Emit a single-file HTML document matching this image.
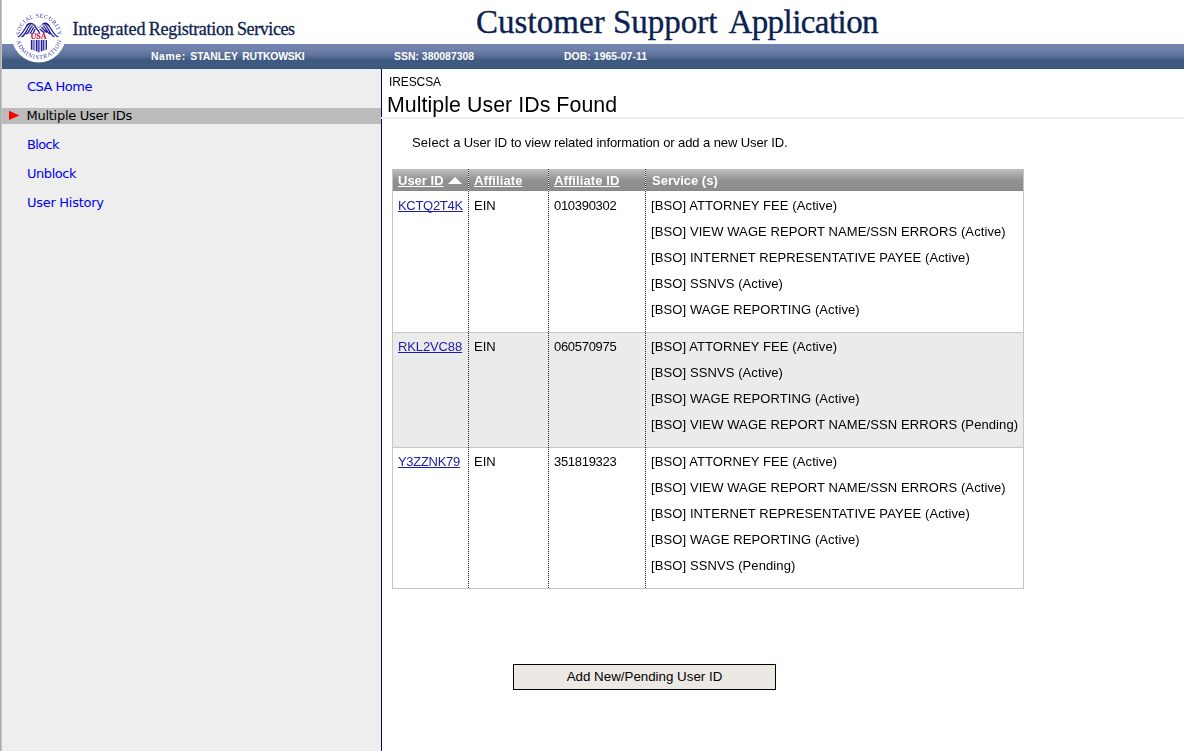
<!DOCTYPE html>
<html lang="en">
<head>
<meta charset="utf-8">
<title>Customer Support Application</title>
<style>
html,body{margin:0;padding:0;}
body{width:1184px;height:751px;position:relative;overflow:hidden;background:#fff;font-family:"Liberation Sans",Arial,sans-serif;font-size:13px;color:#000;}
#strip{position:absolute;left:0;top:0;width:2px;height:751px;background:linear-gradient(to right,#aaa 0,#b4b4b4 60%,#d8d8d8 100%);}
#bar{position:absolute;left:2px;top:44px;width:1182px;height:25px;background:linear-gradient(to bottom,#7585b2 0%,#7182ad 20%,#5a6f97 48%,#3f5a80 64%,#3f5a80 94%,#334d74 100%);}
#bar span{position:absolute;top:0;line-height:25px;font-weight:bold;font-size:10.4px;color:#fff;white-space:nowrap;word-spacing:1.6px;}
#bar span b{letter-spacing:.6px;}
#bar span i{font-style:normal;letter-spacing:-.2px;}
#irs{position:absolute;left:73px;top:16.5px;font-family:"Liberation Serif",Georgia,serif;font-size:18px;line-height:24px;color:#0b2250;white-space:nowrap;-webkit-text-stroke:0.3px #0b2250;}
#irs span{position:absolute;top:0;}
#title{position:absolute;left:477px;top:1.7px;font-family:"Liberation Serif",Georgia,serif;font-size:33px;line-height:40px;color:#0b2250;white-space:nowrap;-webkit-text-stroke:0.35px #0b2250;}
#title span{position:absolute;top:0;}
#seal{position:absolute;left:0;top:0;will-change:transform;}
#side{position:absolute;left:2px;top:69px;width:379px;height:682px;background:#eee;border-right:1px solid #00007a;}
#side a,#side div.cur{position:absolute;left:25px;font-family:"DejaVu Sans",Verdana,sans-serif;font-size:13px;line-height:16px;color:#0000f0;text-decoration:none;white-space:nowrap;}
#side .hl{position:absolute;left:0;top:39px;width:379px;height:16px;background:#bbb;}
#side div.cur{color:#000;}
#main{position:absolute;left:382px;top:69px;width:802px;height:682px;}
#crumb{position:absolute;left:7px;top:6px;font-size:12px;line-height:14px;letter-spacing:-0.1px;}
#h1{position:absolute;left:5px;top:24px;letter-spacing:0.06px;font-size:21.33px;line-height:24px;margin:0;font-weight:normal;white-space:nowrap;}
#rule{position:absolute;left:-1px;top:48px;width:803px;height:2px;background:#ececec;border-left:1px solid #fff;box-sizing:border-box;z-index:3;}
#intro{position:absolute;left:30px;top:66px;font-size:13px;line-height:16px;white-space:nowrap;margin:0;letter-spacing:-0.1px;}
#tw{position:absolute;left:10px;top:100px;width:632px;height:420px;}
#tw i.sep{position:absolute;top:0;width:1px;height:420px;background:linear-gradient(#fff,#fff) 0 0/1px 22px no-repeat;}
#tw i.sep::after{content:"";position:absolute;left:0;top:0;width:1px;height:420px;background:repeating-linear-gradient(to bottom,#262626 0,#262626 1px,transparent 1px,transparent 2px);}
table{position:absolute;left:0;top:0;width:632px;table-layout:fixed;border-collapse:separate;border-spacing:0;border-left:1px solid #c6c6c6;border-right:1px solid #c6c6c6;font-size:13px;}
th{height:22px;padding:1px 0 0 6px;box-sizing:border-box;text-align:left;color:#fff;font-weight:bold;font-size:13px;line-height:21px;background:linear-gradient(to bottom,#bfbfbf 0%,#a9a9a9 25%,#909090 52%,#8e8e8e 94%,#828282 100%);white-space:nowrap;overflow:hidden;}
th span.u{text-decoration:underline;}
td{vertical-align:top;padding:2px 0 0 6px;border-bottom:1px solid #c8c8c8;line-height:26px;white-space:nowrap;box-sizing:border-box;}
tr.r1 td{height:142px;}
tr.r2 td{height:115px;background:#ebebeb;padding-top:1px;}
tr.r3 td{height:141px;padding-top:1px;}
td a{color:#1c1ca8;text-decoration:underline;text-decoration-skip-ink:none;letter-spacing:-0.3px;}
th:first-child,td:first-child{padding-left:5px;}
td:nth-child(3){letter-spacing:-0.3px;}
td:nth-child(4){letter-spacing:0.1px;padding-left:6px;}
th:nth-child(4){padding-left:7px;}
th:nth-child(2),th:nth-child(3){letter-spacing:0.1px;}
td div{height:26px;}
.tri{display:inline-block;width:0;height:0;border-left:7px solid transparent;border-right:7px solid transparent;border-bottom:7px solid #fff;margin-left:4px;vertical-align:1px;}
#btn{position:absolute;left:131px;top:595px;width:263px;height:26px;box-sizing:border-box;border:1px solid #000;background:#ece9e4;font-family:"Liberation Sans",Arial,sans-serif;font-size:13.33px;line-height:24px;text-align:center;color:#000;padding:0;}
</style>
</head>
<body>
<div id="strip"></div>
<div id="irs"><span style="left:-.6px;letter-spacing:.02px">Integrated </span><span style="left:75.7px;letter-spacing:-.26px">Registration </span><span style="left:164px;letter-spacing:-.42px">Services</span></div>
<div id="title"><span style="left:-1px;letter-spacing:.05px">Customer </span><span style="left:136px">Support </span><span style="left:251.4px;letter-spacing:-.56px">Application</span></div>
<div id="bar">
  <span style="left:149px"><b>Name:</b> STANLEY <i>RUTKOWSKI</i></span>
  <span style="left:392px;word-spacing:0;letter-spacing:.03px">SSN: 380087308</span>
  <span style="left:562px;word-spacing:0;letter-spacing:.07px">DOB: 1965-07-11</span>
</div>
<svg id="seal" width="80" height="72" viewBox="0 0 80 72">
  <defs><path id="arcT" d="M20.05 35.08 A18.9 18.9 0 0 1 57.75 35.08"/><path id="arcB" d="M16.66 40.93 A22.7 22.7 0 0 0 61.14 40.93"/></defs>
  <circle cx="38.7" cy="35.5" r="27" fill="#fff"/>
  <g font-family="'Liberation Serif',Georgia,serif" font-weight="normal" font-size="5.9" fill="#3030ae">
    <text textLength="56.7" lengthAdjust="spacing"><textPath href="#arcT" textLength="56.7" lengthAdjust="spacing">SOCIAL SECURITY</textPath></text>
    <text textLength="62.2" lengthAdjust="spacing"><textPath href="#arcB" textLength="62.2" lengthAdjust="spacing">ADMINISTRATION</textPath></text>
  </g>
  <g fill="none" stroke="#1c1c98" stroke-width="1.3" stroke-linecap="round">
    <path d="M28.8 24.0 C25.2 25.9 22.8 35.3 18.4 36.6 M30.8 24.5 C27.7 26.3 25.7 35.4 22.0 36.6 M32.2 26.0 C30.2 27.2 29.0 33.0 26.6 33.8 M33.5 27.9 C32.3 28.7 31.5 32.5 30.0 33.0 M35.0 29.6 C34.3 30.1 33.8 32.7 33.0 33.0 M46.8 24.0 C50.6 25.9 53.2 35.3 57.8 36.6 M44.8 24.5 C48.0 26.3 50.1 35.4 54.0 36.6 M43.2 26.0 C45.6 27.2 47.1 33.0 50.0 33.8 M41.6 27.7 C43.4 28.4 44.5 31.7 46.6 32.1 M40.0 29.4 C41.4 29.8 42.3 32.0 44.0 32.3"/>
    <path d="M26.6 25.4 C28.6 23.4 31.4 23.0 33.4 24.4 L39.3 32.4"/>
    <path d="M49.0 25.4 C47.0 23.2 44.4 22.9 42.6 24.2"/>
  </g>
  <path d="M33.6 24.4 C35.4 24.2 36.4 26.4 37.6 27.2 C39.0 28.0 40.6 26.4 42.4 24.4" fill="none" stroke="#6a6ac4" stroke-width="0.9" stroke-linecap="round"/>
  <text x="30.5" y="39.2" font-family="'Liberation Serif',Georgia,serif" font-weight="bold" font-size="7.6" fill="#d4123a" stroke="#d4123a" stroke-width="0.15" textLength="16.2" lengthAdjust="spacingAndGlyphs">USA</text>
  <path d="M30.9 40 H46.9 V49.4 C44.6 50.2 41.6 50.8 38.9 52.4 C36.2 50.8 33.2 50.2 30.9 49.4 Z" fill="#a4a4dc"/>
  <g fill="#1c1c98"><rect x="30.9" y="40" width="1.2" height="9.6"/><rect x="33.5" y="40" width="1.0" height="10.4" fill="#5a5abc"/><rect x="35.9" y="40" width="1.3" height="11.2"/><rect x="38.3" y="40" width="1.2" height="12.2" fill="#3c3cac"/><rect x="40.9" y="40" width="1.2" height="11.2"/><rect x="43.2" y="40" width="1.1" height="10.4"/><rect x="45.8" y="40" width="1.1" height="9.6"/></g>
  <g fill="#fff"><rect x="34.9" y="40" width="0.6" height="11"/><rect x="39.9" y="40" width="0.6" height="12"/><rect x="44.6" y="40" width="0.6" height="10"/></g>
</svg>
<div id="side">
  <div class="hl"></div>
  <a href="#" style="top:10px;letter-spacing:-0.5px">CSA Home</a>
  <div class="cur" style="top:39px;left:24.5px;letter-spacing:-0.27px">Multiple User IDs</div>
  <a href="#" style="top:68px;letter-spacing:-0.64px">Block</a>
  <a href="#" style="top:97px;letter-spacing:-0.46px">Unblock</a>
  <a href="#" style="top:126px;letter-spacing:-0.28px">User History</a>
  <svg style="position:absolute;left:7px;top:41px" width="11" height="11" viewBox="0 0 11 11"><path d="M0 0.7 L10.3 5.4 L0 10.1 Z" fill="#f00"/></svg>
</div>
<div id="main">
  <div id="crumb">IRESCSA</div>
  <h1 id="h1">Multiple User IDs Found</h1>
  <div id="rule"></div>
  <p id="intro"><span style="letter-spacing:.2px">Select </span>a User ID to view related information or add a new User ID.</p>
  <div id="tw">
  <table>
    <colgroup><col style="width:75px"><col style="width:80px"><col style="width:97px"><col style="width:378px"></colgroup>
    <tr><th><span class="u">User ID</span><i class="tri"></i></th><th><span class="u">Affiliate</span></th><th><span class="u">Affiliate ID</span></th><th>Service (s)</th></tr>
    <tr class="r1"><td><a href="#">KCTQ2T4K</a></td><td>EIN</td><td>010390302</td><td><div>[BSO] ATTORNEY FEE (Active)</div><div>[BSO] VIEW WAGE REPORT NAME/SSN ERRORS (Active)</div><div>[BSO] INTERNET REPRESENTATIVE PAYEE (Active)</div><div>[BSO] SSNVS (Active)</div><div>[BSO] WAGE REPORTING (Active)</div></td></tr>
    <tr class="r2"><td><a href="#" style="letter-spacing:-0.12px">RKL2VC88</a></td><td>EIN</td><td>060570975</td><td><div>[BSO] ATTORNEY FEE (Active)</div><div>[BSO] SSNVS (Active)</div><div>[BSO] WAGE REPORTING (Active)</div><div>[BSO] VIEW WAGE REPORT NAME/SSN ERRORS (Pending)</div></td></tr>
    <tr class="r3"><td><a href="#">Y3ZZNK79</a></td><td>EIN</td><td>351819323</td><td><div>[BSO] ATTORNEY FEE (Active)</div><div>[BSO] VIEW WAGE REPORT NAME/SSN ERRORS (Active)</div><div>[BSO] INTERNET REPRESENTATIVE PAYEE (Active)</div><div>[BSO] WAGE REPORTING (Active)</div><div>[BSO] SSNVS (Pending)</div></td></tr>
  </table>
  <i class="sep" style="left:76px"></i><i class="sep" style="left:156px"></i><i class="sep" style="left:253px"></i>
  </div>
  <button id="btn" type="button">Add New/Pending User ID</button>
</div>
</body>
</html>
